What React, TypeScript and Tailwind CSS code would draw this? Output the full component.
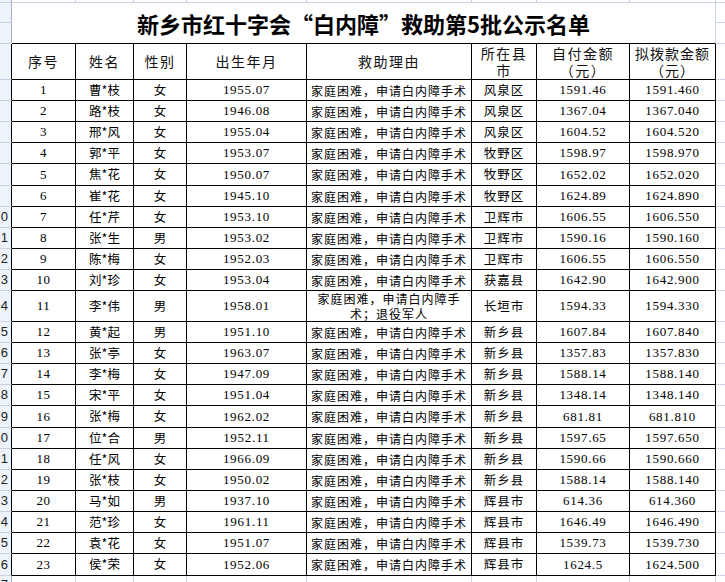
const cols = [
  "w-[64px]",
  "w-[58px]",
  "w-[53px]",
  "w-[120px]",
  "w-[165px]",
  "w-[65px]",
  "w-[93px]",
  "w-[86px]",
];

const cjk = "font-['Noto_Sans_CJK_SC',sans-serif]";
const num = "font-['Liberation_Serif','Noto_Sans_CJK_SC',serif]";
const reason = "家庭困难，申请白内障手术";

type Person = {
  name: string;
  sex: string;
  born: string;
  area: string;
  paid: string;
  grant: string;
  h: string;
  mark: string;
};

const people: Person[] = [
  { name: "曹*枝", sex: "女", born: "1955.07", area: "风泉区", paid: "1591.46", grant: "1591.460", h: "h-[21px]", mark: "" },
  { name: "路*枝", sex: "女", born: "1946.08", area: "风泉区", paid: "1367.04", grant: "1367.040", h: "h-[21px]", mark: "" },
  { name: "邢*风", sex: "女", born: "1955.04", area: "风泉区", paid: "1604.52", grant: "1604.520", h: "h-[21px]", mark: "" },
  { name: "郭*平", sex: "女", born: "1953.07", area: "牧野区", paid: "1598.97", grant: "1598.970", h: "h-[21px]", mark: "" },
  { name: "焦*花", sex: "女", born: "1950.07", area: "牧野区", paid: "1652.02", grant: "1652.020", h: "h-[22px]", mark: "" },
  { name: "崔*花", sex: "女", born: "1945.10", area: "牧野区", paid: "1624.89", grant: "1624.890", h: "h-[21px]", mark: "" },
  { name: "任*芹", sex: "女", born: "1953.10", area: "卫辉市", paid: "1606.55", grant: "1606.550", h: "h-[21px]", mark: "0" },
  { name: "张*生", sex: "男", born: "1953.02", area: "卫辉市", paid: "1590.16", grant: "1590.160", h: "h-[21px]", mark: "1" },
  { name: "陈*梅", sex: "女", born: "1952.03", area: "卫辉市", paid: "1606.55", grant: "1606.550", h: "h-[21px]", mark: "2" },
  { name: "刘*珍", sex: "女", born: "1953.04", area: "获嘉县", paid: "1642.90", grant: "1642.900", h: "h-[21px]", mark: "3" },
  { name: "李*伟", sex: "男", born: "1958.01", area: "长垣市", paid: "1594.33", grant: "1594.330", h: "h-[31px]", mark: "4" },
  { name: "黄*起", sex: "男", born: "1951.10", area: "新乡县", paid: "1607.84", grant: "1607.840", h: "h-[21px]", mark: "5" },
  { name: "张*亭", sex: "女", born: "1963.07", area: "新乡县", paid: "1357.83", grant: "1357.830", h: "h-[21px]", mark: "6" },
  { name: "李*梅", sex: "女", born: "1947.09", area: "新乡县", paid: "1588.14", grant: "1588.140", h: "h-[21px]", mark: "7" },
  { name: "宋*平", sex: "女", born: "1951.04", area: "新乡县", paid: "1348.14", grant: "1348.140", h: "h-[21px]", mark: "8" },
  { name: "张*梅", sex: "女", born: "1962.02", area: "新乡县", paid: "681.81", grant: "681.810", h: "h-[22px]", mark: "9" },
  { name: "位*合", sex: "男", born: "1952.11", area: "新乡县", paid: "1597.65", grant: "1597.650", h: "h-[21px]", mark: "0" },
  { name: "任*风", sex: "女", born: "1966.09", area: "新乡县", paid: "1590.66", grant: "1590.660", h: "h-[21px]", mark: "1" },
  { name: "张*枝", sex: "女", born: "1950.02", area: "新乡县", paid: "1588.14", grant: "1588.140", h: "h-[21px]", mark: "2" },
  { name: "马*如", sex: "男", born: "1937.10", area: "辉县市", paid: "614.36", grant: "614.360", h: "h-[21px]", mark: "3" },
  { name: "范*珍", sex: "女", born: "1961.11", area: "辉县市", paid: "1646.49", grant: "1646.490", h: "h-[21px]", mark: "4" },
  { name: "袁*花", sex: "女", born: "1951.07", area: "辉县市", paid: "1539.73", grant: "1539.730", h: "h-[21px]", mark: "5" },
  { name: "侯*荣", sex: "女", born: "1952.06", area: "辉县市", paid: "1624.5", grant: "1624.500", h: "h-[22px]", mark: "6" },
];

function Gutter({ mark, edge }: { mark?: string; edge?: boolean }) {
  return (
    <div
      className={`w-[12px] shrink-0 self-stretch bg-[#eef2f9] border-r border-b border-b-[#c8d2e4] flex items-center justify-end pr-[3px] overflow-hidden text-[13px] text-[#222] font-['Liberation_Sans',sans-serif] ${
        edge ? "border-r-black" : "border-r-[#9fb1cf]"
      }`}
    >
      {mark}
    </div>
  );
}

function Cell({ i, children, className = "" }: { i: number; children?: React.ReactNode; className?: string }) {
  return (
    <div
      className={`${cols[i]} shrink-0 self-stretch border-r border-b border-black flex flex-col items-center justify-center text-center ${className}`}
    >
      {children}
    </div>
  );
}

function Spare() {
  return <div className="flex-1 self-stretch border-b border-[#c8d2e4]" />;
}

function PersonRow({ p, n }: { p: Person; n: number }) {
  return (
    <div className={`flex ${p.h}`}>
      <Gutter mark={p.mark} edge />
      <Cell i={0} className={`${num} text-[13px] tracking-[0.5px]`}>{n}</Cell>
      <Cell i={1} className={`${cjk} text-[12.5px]`}>{p.name}</Cell>
      <Cell i={2} className={`${cjk} text-[12.5px]`}>{p.sex}</Cell>
      <Cell i={3} className={`${num} text-[13px] tracking-[0.7px]`}>{p.born}</Cell>
      <Cell i={4} className={`${cjk} text-[12px] tracking-[1px] leading-[15px]`}>
        {n === 11 ? (
          <>
            <span>家庭困难，申请白内障手</span>
            <span>术；退役军人</span>
          </>
        ) : (
          reason
        )}
      </Cell>
      <Cell i={5} className={`${cjk} text-[12.5px] tracking-[1px]`}>{p.area}</Cell>
      <Cell i={6} className={`${num} text-[13px] tracking-[0.7px]`}>{p.paid}</Cell>
      <Cell i={7} className={`${num} text-[13px] tracking-[0.7px]`}>{p.grant}</Cell>
      <Spare />
    </div>
  );
}

export default function App() {
  const head = `${cjk} text-[14px] tracking-[1.5px] leading-[17px] text-[#111]`;
  return (
    <div className="w-[725px] h-[582px] overflow-hidden bg-white text-black">
      {/* partial sheet row above the title */}
      <div className="flex h-[3px]">
        <Gutter />
        {cols.map((w) => (
          <div key={w} className={`${w} shrink-0 border-r border-b border-[#c8d2e4]`} />
        ))}
        <Spare />
      </div>

      {/* title, merged over two sheet rows */}
      <div className="flex h-[41px]">
        <div className="flex flex-col">
          <div className="flex h-[20px]">
            <Gutter />
          </div>
          <div className="flex h-[21px]">
            <Gutter />
          </div>
        </div>
        <div
          className={`w-[704px] shrink-0 border-r border-r-[#c8d2e4] border-b border-b-black flex items-center justify-center pt-[1px] text-[22px] font-bold ${cjk}`}
        >
          新乡市红十字会“白内障”救助第5批公示名单
        </div>
        <div className="flex-1 flex flex-col">
          <div className="h-[20px] border-b border-[#c8d2e4]" />
          <div className="h-[21px] border-b border-[#c8d2e4]" />
        </div>
      </div>

      {/* column headings */}
      <div className="flex h-[36px]">
        <Gutter edge />
        <Cell i={0} className={head}>序号</Cell>
        <Cell i={1} className={head}>姓名</Cell>
        <Cell i={2} className={head}>性别</Cell>
        <Cell i={3} className={head}>出生年月</Cell>
        <Cell i={4} className={head}>救助理由</Cell>
        <Cell i={5} className={head}>
          <span>所在县</span>
          <span>市</span>
        </Cell>
        <Cell i={6} className={head}>
          <span>自付金额</span>
          <span>（元）</span>
        </Cell>
        <Cell i={7} className={`${head} tracking-[1px]`}>
          <span>拟拨款金额</span>
          <span>（元）</span>
        </Cell>
        <Spare />
      </div>

      {people.map((p, idx) => (
        <PersonRow key={idx} p={p} n={idx + 1} />
      ))}

      {/* next empty sheet row */}
      <div className="flex h-[21px]">
        <div className="w-[12px] shrink-0 bg-[#eef2f9] border-r border-[#9fb1cf] flex items-start justify-end pt-[1px] pr-[3px] overflow-hidden text-[13px] leading-[15px] text-[#222] font-['Liberation_Sans',sans-serif]">
          7
        </div>
        {cols.map((w) => (
          <div key={w} className={`${w} shrink-0 border-r border-[#c8d2e4]`} />
        ))}
        <Spare />
      </div>
    </div>
  );
}
